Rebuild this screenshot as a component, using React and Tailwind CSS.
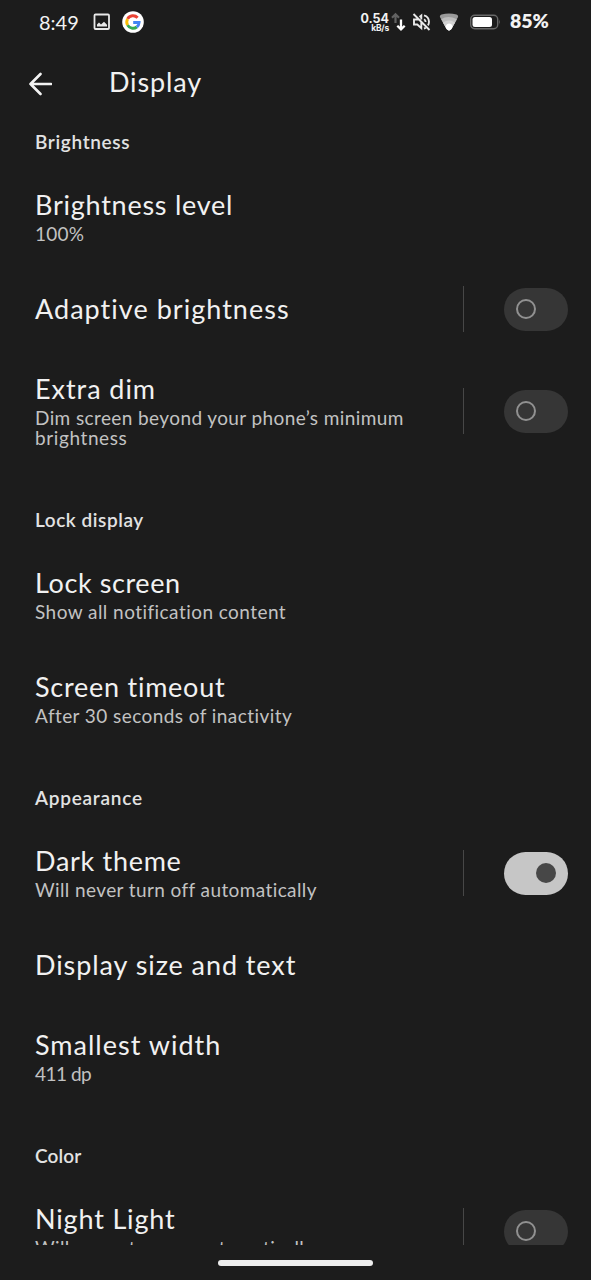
function Switch({ on }) {
  return (
    <div className={`flex h-[43px] w-16 shrink-0 items-center rounded-full ${on ? 'bg-[#c6c6c6]' : 'bg-[#363636]'}`}>
      {on ? (
        <div className="ml-8 size-5 rounded-full bg-[#474747]" />
      ) : (
        <div className="ml-3 size-5 rounded-full border-2 border-[#919191]" />
      )}
    </div>
  );
}

function Section({ title, track }) {
  return (
    <h2 className="flex h-[70px] items-end px-[35px] pb-[11px] text-[19px] leading-6 font-semibold text-[#e2e2e2]">
      <span className={track}>{title}</span>
    </h2>
  );
}

function Row({ title, track, lines = [], toggle }) {
  return (
    <div className="flex shrink-0 items-center pr-[23px] pl-[35px]">
      <div className="w-[428px] py-6 whitespace-nowrap">
        <div className="text-[27px] leading-8 text-[#f1f1f1]">
          <span className={track}>{title}</span>
        </div>
        {lines.length > 0 && (
          <div className="mt-[3px] mb-px text-[19px] leading-5 text-[#c2c2c2]">
            {lines.map(([text, t]) => (
              <div key={text}>
                <span className={t}>{text}</span>
              </div>
            ))}
          </div>
        )}
      </div>
      {toggle && (
        <div className="flex flex-1 items-center justify-between">
          <div className="-mt-px h-[46px] w-px bg-[#474747]" />
          <Switch on={toggle === 'on'} />
        </div>
      )}
    </div>
  );
}

function StatusBar() {
  return (
    <div className="flex h-11 shrink-0 items-center text-[#f2f2f2]">
      <span className="-mt-px ml-[39px] w-[54px] text-[20px] leading-6">8:49</span>
      <svg className="size-[18px]" viewBox="0 0 18 18">
        <rect x="1.500" y="1.500" width="14.500" height="14.500" rx="1" fill="none" stroke="#e8e8e8" strokeWidth="1.800" />
        <path d="M4 13.500v-2l2-2 2 2L11 8.800l3 3v1.700z" fill="#e8e8e8" />
      </svg>
      <svg className="ml-[11px] size-[22px]" viewBox="0 0 22 22">
        <circle cx="11" cy="11" r="10.800" fill="#fff" />
        <g fill="none" strokeWidth="2.900">
          <path d="M15.600 6.700A6.200 6.200 0 0 0 5.600 7.900" stroke="#ea4335" />
          <path d="M5.600 7.900a6.200 6.200 0 0 0 0 6.200" stroke="#fbbc05" />
          <path d="M5.600 14.100a6.200 6.200 0 0 0 9.200 1.900" stroke="#34a853" />
          <path d="M14.800 16a6.200 6.200 0 0 0 2.300-4.500H11.200" stroke="#4285f4" />
        </g>
      </svg>
      <div className="mt-px ml-[216px] w-[29px] text-right font-[Inter] font-bold">
        <div className="text-[12.500px] leading-[11px]">0.54</div>
        <div className="text-[8.500px] leading-[8px] tracking-[-0.200px]">kB/s</div>
      </div>
      <svg className="ml-[2px] h-[20px] w-[15px]" viewBox="0 0 15 20">
        <path d="M4.500 11V3M1 5.800L4.500 2.300L8 5.800" fill="none" stroke="#626262" strokeWidth="2.200" />
        <path d="M10 7.500v9M6.300 13.700l3.700 3.700 3.700-3.700" fill="none" stroke="#fff" strokeWidth="2.300" />
      </svg>
      <svg className="ml-[6px] h-[20px] w-[19px]" viewBox="0 0 19 20" fill="none" stroke="#e8e8e8" strokeWidth="1.900">
        <path d="M1.500 2L17.500 18M7 7.500L3.800 7.500H2v5h3.300l4 3.600v-6M7.500 5L9.300 3.500v4M12 7.300c1 .6 1.600 1.500 1.600 2.700M12 3.300c3 .9 5 3.500 5 6.500 0 1.400-.4 2.600-1.100 3.600M12 16.500c.7-.2 1.200-.4 1.700-.8" />
      </svg>
      <svg className="ml-[8px] h-[18px] w-[20px]" viewBox="0 0 20 18">
        <path d="M2.500 1.500Q10-.5 17.500 1.500Q19.800 2.500 18.800 4.500L12.400 16Q10 18.800 7.600 16L1.200 4.500Q.2 2.500 2.500 1.500z" fill="#9a9a9a" />
        <path d="M2.200 6.200Q9 2 17.900 6.200L12.400 16Q10 18.800 7.600 16z" fill="#bdbdbd" />
        <path d="M4 9.400Q10 5.500 16 9.400L12.400 16Q10 18.800 7.600 16z" fill="#d2d2d2" />
        <path d="M6.400 13.500Q7.500 10.500 10 10.500Q12.800 10.500 13.700 13.500L12.400 16Q10 18.800 7.600 16z" fill="#fff" />
      </svg>
      <svg className="ml-[10px] h-[16px] w-[32px]" viewBox="0 0 32 16">
        <rect x="1.700" y="1.200" width="27" height="13.500" rx="4" fill="none" stroke="#686868" strokeWidth="1.400" />
        <rect x="3.500" y="3" width="19.500" height="10" rx="2.500" fill="#fff" />
        <path d="M30 5.500q1.600 2.500 0 5z" fill="#686868" />
      </svg>
      <span className="-mt-[3px] ml-[9px] font-[Lato] text-[19.500px] leading-6 font-extrabold">85%</span>
    </div>
  );
}

export default function App() {
  return (
    <div className="flex h-[1280px] w-[591px] flex-col overflow-hidden bg-[#1c1c1c] font-[Lato,sans-serif]">
      <StatusBar />
      <header className="flex h-[51px] shrink-0 items-start pl-[28px] text-[#f1f1f1]">
        <svg className="mt-[28px] size-6" viewBox="0 0 24 24" fill="none" stroke="#f2f2f2" strokeWidth="2.600" strokeLinecap="round" strokeLinejoin="round">
          <path d="M23 12H2.500M12.500 2L2.500 12L12.500 22" />
        </svg>
        <h1 className="mt-[22px] ml-[57px] text-[27px] leading-8">
          <span className="tracking-[0.850px]">Display</span>
        </h1>
      </header>
      <main className="h-[1150px] overflow-hidden">
        <Section title="Brightness" track="tracking-[0.650px]" />
        <Row title="Brightness level" track="tracking-[0.750px]" lines={[['100%', 'tracking-[0.250px]']]} />
        <Row title="Adaptive brightness" track="tracking-[1.030px]" toggle="off" />
        <Row
          title="Extra dim"
          track="tracking-[0.950px]"
          lines={[
            ['Dim screen beyond your phone’s minimum', 'tracking-[0.400px]'],
            ['brightness', 'tracking-[0.600px]'],
          ]}
          toggle="off"
        />
        <Section title="Lock display" track="tracking-[0.550px]" />
        <Row title="Lock screen" track="tracking-[0.600px]" lines={[['Show all notification content', 'tracking-[0.450px]']]} />
        <Row title="Screen timeout" track="tracking-[0.750px]" lines={[['After 30 seconds of inactivity', 'tracking-[0.430px]']]} />
        <Section title="Appearance" track="tracking-[0.750px]" />
        <Row title="Dark theme" track="tracking-[0.700px]" lines={[['Will never turn off automatically', 'tracking-[0.400px]']]} toggle="on" />
        <Row title="Display size and text" track="tracking-[0.930px]" />
        <Row title="Smallest width" track="tracking-[1px]" lines={[['411 dp', 'tracking-[-0.500px]']]} />
        <Section title="Color" track="tracking-[0.100px]" />
        <Row title="Night Light" track="tracking-[0.830px]" lines={[['Will never turn on automatically', 'tracking-[0.400px]']]} toggle="off" />
      </main>
      <div className="flex h-[35px] shrink-0 justify-center pt-[15px]">
        <div className="h-[6px] w-[155px] rounded-full bg-[#ededed]" />
      </div>
    </div>
  );
}
